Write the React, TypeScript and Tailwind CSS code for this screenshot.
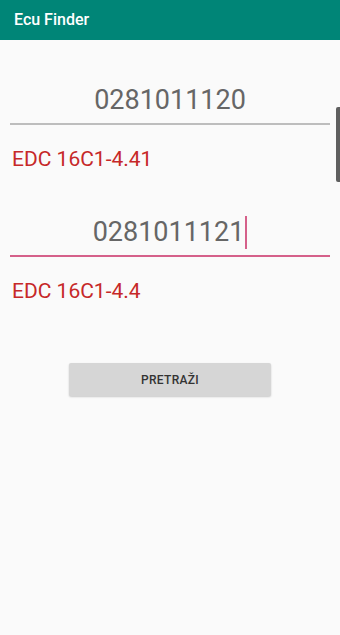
import React from "react";

const results = [
  { code: "0281011120", ecu: "EDC 16C1-4.41", focused: false },
  { code: "0281011121", ecu: "EDC 16C1-4.4", focused: true },
];

export default function App() {
  return (
    <div
      className="relative w-[340px] h-[635px] bg-[#fafafa] overflow-hidden"
      style={{ fontFamily: "Roboto, 'Liberation Sans', sans-serif" }}
    >
      {/* Toolbar */}
      <div className="h-[40px] bg-[#008577] flex items-center px-[14px]">
        <span className="text-white text-[16px] font-medium">Ecu Finder</span>
      </div>

      <div className="flex flex-col px-[10px] pt-[37px]">
        {results.map((r) => (
          <div key={r.code} className="flex flex-col">
            <div
              className={`h-[48px] flex items-center justify-center border-b-2 ${
                r.focused ? "border-[#d5608a]" : "border-[#bdbdbd]"
              }`}
            >
              <span className="text-[27px] text-[#666666] leading-none">{r.code}</span>
              {r.focused && <span className="w-[2px] h-[33px] bg-[#d5608a] ml-[1px]" />}
            </div>
            <div className="h-[84px] pt-[24px] pl-[2px]">
              <span className="text-[21px] text-[#c62828] leading-none">{r.ecu}</span>
            </div>
          </div>
        ))}

        <div className="flex justify-center pt-[22px]">
          <button className="w-[202px] h-[33px] bg-[#d6d6d6] rounded-[2px] shadow-[0_1px_2px_rgba(0,0,0,0.2)] text-[12px] font-medium text-[#333] tracking-[0.3px]">
            PRETRAŽI
          </button>
        </div>
      </div>

      {/* Scroll indicator */}
      <div className="absolute right-0 top-[107px] w-[4px] h-[75px] bg-[#5f5f5f] rounded-l-[2px]" />
    </div>
  );
}
